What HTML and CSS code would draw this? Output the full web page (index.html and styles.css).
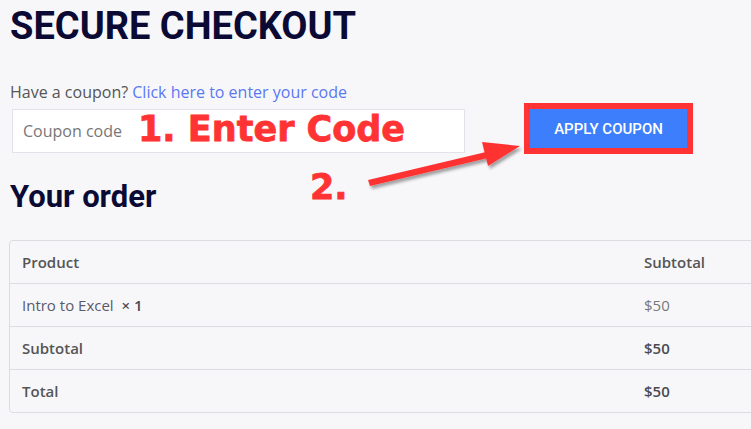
FILE: index.html
```html
<!DOCTYPE html>
<html lang="en">
<head>
    <meta charset="UTF-8">
    <meta name="viewport" content="width=device-width, initial-scale=1.0">
    <title>Secure Checkout</title>
    <link rel="stylesheet" href="styles.css">
</head>
<body>
    <main class="checkout">
        <h1 class="page-title">SECURE CHECKOUT</h1>

        <p class="coupon-notice">Have a coupon? <a href="#">Click here to enter your code</a></p>

        <!-- Coupon form -->
        <form class="coupon-form">
            <input type="text" class="coupon-input" placeholder="Coupon code">
            <div class="apply-frame">
                <button type="button" class="apply-button">APPLY COUPON</button>
            </div>
        </form>

        <h2 class="order-title">Your order</h2>

        <table class="order-table">
            <colgroup>
                <col class="col-product">
                <col>
            </colgroup>
            <thead>
                <tr>
                    <th>Product</th>
                    <th>Subtotal</th>
                </tr>
            </thead>
            <tbody>
                <tr>
                    <td class="item-name">Intro to Excel <strong>&nbsp;× 1</strong></td>
                    <td class="item-price">$50</td>
                </tr>
            </tbody>
            <tfoot>
                <tr>
                    <th>Subtotal</th>
                    <td><strong>$50</strong></td>
                </tr>
                <tr>
                    <th>Total</th>
                    <td><strong>$50</strong></td>
                </tr>
            </tfoot>
        </table>

        <!-- Annotations drawn on top of the screenshot -->
        <span class="note note-one">1. Enter Code</span>
        <span class="note note-two">2.</span>
        <svg class="note-arrow" width="751" height="429" viewBox="0 0 751 429">
            <defs>
                <filter id="shadow" x="-20%" y="-50%" width="140%" height="200%">
                    <feDropShadow dx="2" dy="3" stdDeviation="1.5" flood-color="#000" flood-opacity="0.35"/>
                </filter>
            </defs>
            <g filter="url(#shadow)" fill="#ff3333">
                <polygon points="368,180 486,152 488,158 370,186"/>
                <polygon points="482,142 520,146 488,166"/>
            </g>
        </svg>
    </main>
</body>
</html>
```

FILE: styles.css
```css
html, body {
    overflow: hidden;
}

body {
    margin: 0;
    background-color: #f7f7fa;
    font-family: 'Open Sans', sans-serif;
    font-size: 16px;
    color: #555;
}

.checkout {
    position: relative;
    padding: 3px 0 0 10px;
    height: 426px;
}

.page-title {
    margin: 0;
    font-family: Roboto, sans-serif;
    font-weight: 700;
    font-size: 38px;
    line-height: 46px;
    color: #0b0a35;
}

.coupon-notice {
    margin: 32px 0 0;
    line-height: 22px;
    color: #555;
}

.coupon-notice a {
    color: #5b78f2;
    text-decoration: none;
}

.coupon-form {
    display: flex;
    align-items: flex-start;
    gap: 59px;
    margin: 6px 0 0 2px;
}

.coupon-input {
    box-sizing: border-box;
    width: 453px;
    height: 44px;
    padding: 0 10px;
    border: 1px solid #e2e2ea;
    background-color: #fff;
    font-family: 'Open Sans', sans-serif;
    font-size: 16px;
    color: #555;
}

.coupon-input::placeholder {
    color: #777;
}

.apply-frame {
    margin-top: -6px;
    padding: 6px;
    background-color: #ff3333;
}

.apply-button {
    display: block;
    width: 157px;
    height: 39px;
    border: none;
    background-color: #3c7efc;
    color: #fff;
    font-family: Roboto, sans-serif;
    font-weight: 500;
    font-size: 15px;
    cursor: pointer;
}

.order-title {
    margin: 24px 0 0;
    font-family: Roboto, sans-serif;
    font-weight: 700;
    font-size: 31px;
    line-height: 37px;
    color: #0b0a35;
}

.order-table {
    margin: 25px 0 0 -1px;
    width: 860px;
    table-layout: fixed;
    border-collapse: separate;
    border-spacing: 0;
    border: 1px solid #dcdce2;
    border-radius: 4px;
    font-size: 15px;
}

.col-product {
    width: 622px;
}

.order-table th,
.order-table td {
    padding: 10px 12px;
    line-height: 22px;
    text-align: left;
    border-top: 1px solid #dcdce2;
}

.order-table thead th {
    border-top: none;
}

.order-table th {
    font-weight: 600;
    color: #555;
}

.item-name {
    color: #5a5a6a;
}

.item-name strong {
    font-weight: 600;
    color: #444;
}

.item-price {
    color: #777;
}

.order-table strong {
    font-weight: 600;
    color: #4a4a52;
}

.note {
    position: absolute;
    font-family: 'DejaVu Sans', sans-serif;
    font-weight: 700;
    font-size: 35px;
    line-height: 1;
    color: #ff3333;
    -webkit-text-stroke: 0.8px #ff3333;
}

.note-one {
    left: 138px;
    top: 112px;
}

.note-two {
    left: 310px;
    top: 170px;
}

.note-arrow {
    position: absolute;
    left: 0;
    top: 0;
    pointer-events: none;
}
```
